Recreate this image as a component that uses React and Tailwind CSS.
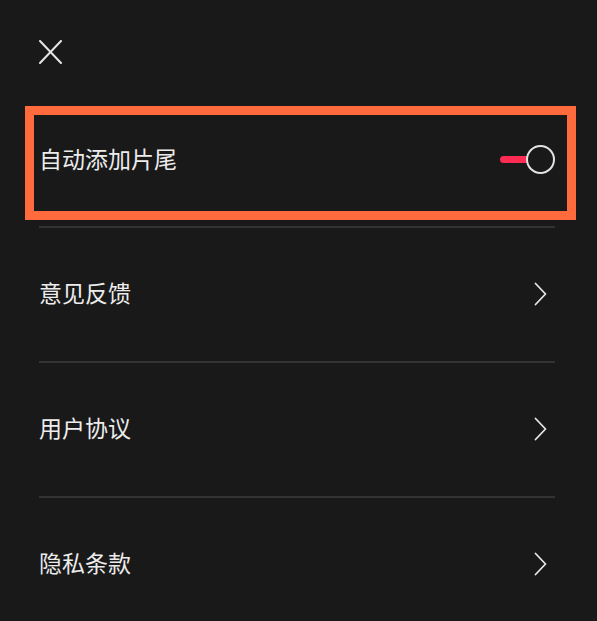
import { useState } from 'react'

const LINKS = ['意见反馈', '用户协议', '隐私条款']

function Chevron() {
  return (
    <svg width="13" height="24" viewBox="0 0 13 24" fill="none">
      <polyline points="1.5,1.5 11.5,12 1.5,22.5" stroke="#e6e6e6" strokeWidth="1.8" strokeLinecap="round" strokeLinejoin="round" />
    </svg>
  )
}

function Toggle({ on, onChange }) {
  return (
    <button onClick={() => onChange(!on)} className="relative flex h-[30px] w-[56px] items-center">
      {/* track */}
      <div className="ml-[1px] h-[7px] w-[30px] rounded-full bg-[#fe2c55]" />
      {/* knob */}
      <div className="absolute right-0 top-[0.5px] h-[29px] w-[29px] rounded-full border-[2.5px] border-[#e2e2e2] bg-[#191919]" />
    </button>
  )
}

export default function App() {
  const [autoEnd, setAutoEnd] = useState(true)

  return (
    <div
      className="h-[621px] w-[597px] overflow-hidden bg-[#191919] text-[#ececec]"
      style={{ fontFamily: '"Noto Sans CJK SC", "Noto Sans", sans-serif' }}
    >
      <div className="pl-[39px] pr-[42px]">
        {/* Header */}
        <div className="h-[93px] pt-[40px]">
          <button className="block">
            <svg width="23" height="24" viewBox="0 0 23 24" fill="none">
              <line x1="1" y1="1" x2="22" y2="23" stroke="#e4e4e4" strokeWidth="2" strokeLinecap="round" />
              <line x1="22" y1="1" x2="1" y2="23" stroke="#e4e4e4" strokeWidth="2" strokeLinecap="round" />
            </svg>
          </button>
        </div>

        {/* Auto end-card row */}
        <div className="relative flex h-[133px] items-center justify-between">
          <div className="pointer-events-none absolute bottom-[6px] left-[-14px] right-[-21px] top-[13px] border-[9px] border-[#ff6b3d]" />
          <span className="pb-[2px] text-[23px] leading-none">自动添加片尾</span>
          <Toggle on={autoEnd} onChange={setAutoEnd} />
        </div>
        <div className="h-[2px] bg-[#333333]" />

        {/* Links */}
        {LINKS.map((label, i) => (
          <div key={label}>
            <button className="flex h-[133px] w-full items-center justify-between text-left">
              <span className="pb-[4px] text-[23px] leading-none">{label}</span>
              <span className="flex w-[29px] justify-center pb-[2px]">
                <Chevron />
              </span>
            </button>
            {i < LINKS.length - 1 && <div className="h-[2px] bg-[#333333]" />}
          </div>
        ))}
      </div>
    </div>
  )
}
